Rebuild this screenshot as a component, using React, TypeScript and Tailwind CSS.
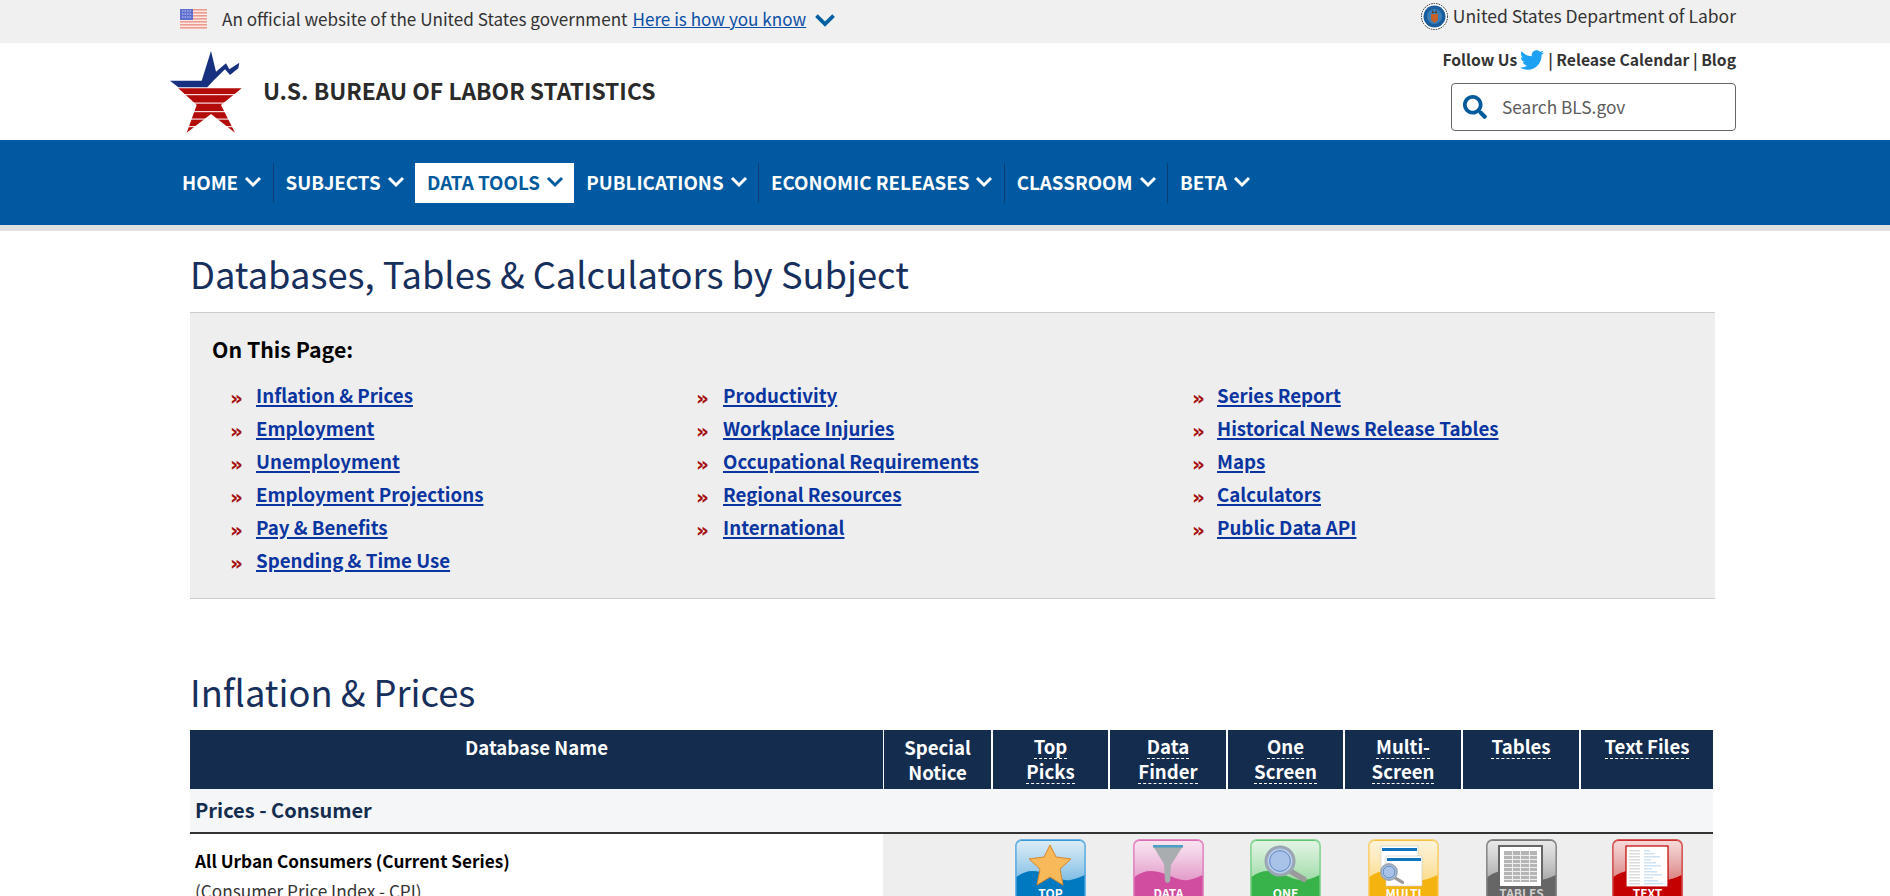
import { FaSearch, FaTwitter } from "react-icons/fa";

const navItems = ["HOME", "SUBJECTS", "DATA TOOLS", "PUBLICATIONS", "ECONOMIC RELEASES", "CLASSROOM", "BETA"];
const navDividers = ["HOME", "PUBLICATIONS", "ECONOMIC RELEASES", "CLASSROOM"];

const col1 = ["Inflation & Prices", "Employment", "Unemployment", "Employment Projections", "Pay & Benefits", "Spending & Time Use"];
const col2 = ["Productivity", "Workplace Injuries", "Occupational Requirements", "Regional Resources", "International"];
const col3 = ["Series Report", "Historical News Release Tables", "Maps", "Calculators", "Public Data API"];

function Chevron({ className }: { className: string }) {
  return (
    <svg className={className} width="18" height="12" viewBox="0 0 18 12" fill="none" stroke="currentColor" strokeWidth="3">
      <path d="M2 2l7 7 7-7" />
    </svg>
  );
}

function Flag() {
  return (
    <svg width="27" height="20" viewBox="0 0 27 20">
      <rect width="27" height="20" fill="#fbe9e6" />
      {[0, 3, 6, 9, 12, 15, 18].map((y) => (
        <rect key={y} y={y} width="27" height="1.6" fill="#ec9c90" />
      ))}
      <rect width="13" height="11" fill="#5f6fd0" />
      {[2, 5, 8].map((y) => (
        <path key={y} d={`M2 ${y}h9`} stroke="#c9cff0" strokeWidth="1" strokeDasharray="1.5 1" />
      ))}
    </svg>
  );
}

function Seal() {
  return (
    <svg width="27" height="27" viewBox="0 0 27 27">
      <circle cx="13.5" cy="13.5" r="13" fill="#fff" stroke="#222" strokeDasharray="1.5 1" />
      <circle cx="13.5" cy="13.5" r="11" fill="#1a5c9c" />
      <circle cx="13.5" cy="13.5" r="7.5" fill="#3a7fb8" />
      <path d="M10 11h7v6l-3.500 3-3.500-3z" fill="#c8602c" />
      <path d="M11 7l2.500 3 2.500-3v3h-5z" fill="#5b3b1e" />
    </svg>
  );
}

function Logo() {
  return (
    <svg width="72" height="82" viewBox="0 0 72 82">
      <path d="M0 29.700h31.700L41 0l5 20.700 10-8.400 3.300 6 10-6.600-1 5.600-8.300 6.700-5-5.700-11.700 11.400-6 6.600H8.300z" fill="#17307f" />
      <path d="M8.300 37.300h63.400L51 54l14 27.700L41 63 16.700 81.700 26.700 54z" fill="#b30a0a" />
      {[43, 51.5, 60, 67.5, 75].map((y) => (
        <rect key={y} x="0" y={y} width="72" height="1.2" fill="#fff" opacity="0.85" />
      ))}
    </svg>
  );
}

function Tile({ id, light, solid, border, label, labelColor, children }: { id: string; light: string; solid: string; border: string; label: string; labelColor: string; children: React.ReactNode }) {
  return (
    <svg width="71" height="70" viewBox="0 0 71 70" className="block mx-auto translate-x-[1px]">
      <defs>
        <linearGradient id={id} x1="0" y1="0" x2="0" y2="1">
          <stop offset="0" stopColor="#ffffff" stopOpacity="0.85" />
          <stop offset="1" stopColor={light} />
        </linearGradient>
      </defs>
      <rect x="0.75" y="0.75" width="69.500" height="68.500" rx="6" fill={solid} stroke={border} strokeWidth="1.500" />
      <path d="M1.500 38c8-6 15-7 24-5s22 10 30 8 10-3 14-5V7a5 5 0 0 0-5-5H6.500a5 5 0 0 0-5 5z" fill={`url(#${id})`} />
      {children}
      <text x="35.500" y="59" textAnchor="middle" fontSize="12" fontWeight="700" fill={labelColor}>{label}</text>
    </svg>
  );
}

function Magnifier({ x, y, r }: { x: number; y: number; r: number }) {
  return (
    <g>
      <path d={`M${x + r * 0.7} ${y + r * 0.7}L${x + r * 1.7} ${y + r * 1.3}`} stroke="#9a9a9a" strokeWidth={r * 0.4} strokeLinecap="round" />
      <circle cx={x} cy={y} r={r} fill="#b9cdea" stroke="#9aa6b4" strokeWidth={r * 0.22} />
      <circle cx={x} cy={y} r={r * 0.74} fill="#a9c2e8" stroke="#4a78b8" strokeWidth="0.8" />
    </g>
  );
}

function HeaderCell({ lines, underline = true, first = false, thin = false }: { lines: string[]; underline?: boolean; first?: boolean; thin?: boolean }) {
  return (
    <div className={`flex flex-col items-center pt-[4px] text-[18.6px] font-bold text-white ${first ? "" : thin ? "border-l border-white" : "border-l-2 border-white"}`}>
      {lines.map((line) => (
        <span key={line} className={underline ? "border-b border-dashed border-white leading-[24px]" : "leading-[25px]"}>{line}</span>
      ))}
    </div>
  );
}

function LinkList({ items, className, linkGap }: { items: string[]; className: string; linkGap: string }) {
  return (
    <ul className={`flex flex-col ${className}`}>
      {items.map((item) => (
        <li key={item} className="flex items-center h-[33px]">
          <span className={`font-['DejaVu_Sans',sans-serif] text-[#a50f0f] font-bold text-[20px] leading-[33px] mt-[8px] ${linkGap}`}>»</span>
          <a href="#" className="text-[#0a35a0] font-bold text-[18.7px] leading-[24px] underline decoration-2 underline-offset-[2px]">{item}</a>
        </li>
      ))}
    </ul>
  );
}

export default function App() {
  return (
    <div className="h-screen overflow-hidden bg-white font-['Noto_Sans_CJK_SC','Liberation_Sans',sans-serif] text-[#222]">
      {/* Gov banner */}
      <div className="h-[43px] bg-[#f0f0f0] flex justify-between pl-[180px] pr-[154px]">
        <div className="flex items-center h-[38px] text-[17.1px] text-[#333]">
          <Flag />
          <span className="ml-[15px]">An official website of the United States government</span>
          <a href="#" className="ml-[5px] text-[#0a4fa5] underline">Here is how you know</a>
          <Chevron className="ml-[8px] w-[22px] h-[15px] text-[#005ea2] mt-[2px]" />
        </div>
        <div className="flex items-center h-[32px] text-[17.5px] text-[#333] gap-[5px]">
          <Seal />
          <span>United States Department of Labor</span>
        </div>
      </div>

      {/* Header */}
      <header className="h-[97px] flex justify-between pl-[170px] pr-[154px]">
        <div className="flex items-start">
          <div className="mt-[8px]"><Logo /></div>
          <div className="ml-[21px] mt-[30px] text-[22.8px] leading-[36px] font-bold text-[#2a2a2a]">U.S. BUREAU OF LABOR STATISTICS</div>
        </div>
        <div className="flex flex-col items-end">
          <div className="mt-[7px] flex items-center h-[20px] text-[15.7px] font-bold text-[#333]">
            Follow Us
            <FaTwitter className="ml-[3px] text-[#1da1f2] text-[24px]" />
            <span className="ml-[4px]">| Release Calendar | Blog</span>
          </div>
          <div className="mt-[13px] w-[285px] h-[48px] border border-[#666] rounded-[4px] flex items-center pl-[11px] text-[17.3px] text-[#5c5c5c]">
            <FaSearch className="text-[#005a9c] text-[24px]" />
            <span className="ml-[15px]">Search BLS.gov</span>
          </div>
        </div>
      </header>

      {/* Main nav */}
      <nav className="h-[85px] bg-[#0059a1] pl-[170px] pt-[23px]">
        <ul className="flex h-[40px]">
          {navItems.map((item) => (
            <li
              key={item}
              className={`flex items-center gap-[6px] pl-3 pr-[10.4px] pb-[2px] text-[18.75px] font-bold ${item === "DATA TOOLS" ? "bg-white text-[#005a9c]" : "text-white"} ${navDividers.includes(item) ? "border-r border-[#0b3f73]" : ""}`}
            >
              {item}
              <Chevron className="" />
            </li>
          ))}
        </ul>
      </nav>
      <div className="h-[6px] bg-[#e0e0e0]" />

      <main className="pl-[190px] pr-[175px]">
        <h1 className="mt-[18px] mb-[15px] text-[36.3px] leading-[48px] text-[#172f5c]">Databases, Tables &amp; Calculators by Subject</h1>

        <section className="h-[287px] bg-[#eee] border-y border-[#ccc] pl-[22px] pt-[20px]">
          <h2 className="text-[21.3px] leading-[32px] font-bold text-black">On This Page:</h2>
          <div className="mt-[13px] pl-[18px] flex">
            <LinkList items={col1} className="w-[466px]" linkGap="w-[26px]" />
            <LinkList items={col2} className="w-[496px]" linkGap="w-[27px]" />
            <LinkList items={col3} className="" linkGap="w-[25px]" />
          </div>
        </section>

        <h2 className="mt-[68px] mb-[15px] text-[36.3px] leading-[48px] text-[#172f5c]">Inflation &amp; Prices</h2>

        {/* Database table */}
        <div className="w-[1523px]">
          <div className="grid grid-cols-[693px_108px_117px_118px_117px_118px_118px_134px] h-[59px] bg-[#142d4f]">
            <HeaderCell lines={["Database Name"]} underline={false} first />
            <HeaderCell lines={["Special", "Notice"]} underline={false} thin />
            <HeaderCell lines={["Top", "Picks"]} />
            <HeaderCell lines={["Data", "Finder"]} />
            <HeaderCell lines={["One", "Screen"]} />
            <HeaderCell lines={["Multi-", "Screen"]} />
            <HeaderCell lines={["Tables"]} />
            <HeaderCell lines={["Text Files"]} />
          </div>
          <div className="h-[45px] bg-[#f5f6f8] border-b-2 border-[#333] flex items-center pl-[5px] pb-[1px] text-[20px] font-bold text-[#142d4f]">Prices - Consumer</div>
          <div className="grid grid-cols-[693px_108px_117px_118px_117px_118px_118px_134px] h-[120px]">
            <div className="pl-[5px] pt-[14px]">
              <div className="text-[17.2px] leading-[26px] font-bold text-black">All Urban Consumers (Current Series)</div>
              <div className="mt-[4px] text-[17.2px] leading-[26px] text-[#333]">(Consumer Price Index - CPI)</div>
            </div>
            <div className="bg-[#eee]" />
            <div className="bg-[#eee] pt-[5px]">
              <Tile id="t1" light="#7fbde4" solid="#0079c1" border="#6db6e6" label="TOP" labelColor="#fff">
                <path d="M35 6l6 12 15 2-11 10 3 16-13-8-13 8 3-16-11-10 15-2z" fill="#f8b95a" stroke="#d9862a" strokeWidth="1" strokeLinejoin="round" />
              </Tile>
            </div>
            <div className="bg-[#eee] pt-[5px]">
              <Tile id="t2" light="#e39ac8" solid="#d04d9f" border="#e48cc4" label="DATA" labelColor="#fff">
                <path d="M20 7h30L38 26l-1 17-3 1-2-2-1-17z" fill="#a9adb0" />
                <rect x="20" y="6" width="30" height="2.500" fill="#4a9fc4" />
              </Tile>
            </div>
            <div className="bg-[#eee] pt-[5px]">
              <Tile id="t3" light="#9edba6" solid="#37b34a" border="#8fd89a" label="ONE" labelColor="#fff">
                <Magnifier x={30} y={22} r={14} />
              </Tile>
            </div>
            <div className="bg-[#eee] pt-[5px]">
              <Tile id="t4" light="#fbdc8c" solid="#f5b30f" border="#fad27a" label="MULTI" labelColor="#fff">
                <rect x="13" y="7" width="37" height="30" fill="#fff" stroke="#c9c9c9" strokeWidth="0.6" />
                <rect x="14" y="9" width="35" height="3" fill="#0f74c0" />
                <rect x="18" y="17" width="36" height="30" fill="#fff" stroke="#c9c9c9" strokeWidth="0.6" />
                <rect x="19" y="19" width="34" height="3" fill="#0f74c0" />
                <Magnifier x={21} y={33} r={8} />
              </Tile>
            </div>
            <div className="bg-[#eee] pt-[5px]">
              <Tile id="t5" light="#a9a9a9" solid="#666" border="#8a8a8a" label="TABLES" labelColor="#d0d0d0">
                <rect x="13" y="7" width="43" height="41" fill="#fff" stroke="#666" strokeWidth="2" />
                <rect x="18" y="12" width="33" height="31" fill="#b5b5b5" />
                {[16, 20, 24, 28, 32, 36, 40].map((y) => (
                  <rect key={y} x="18" y={y} width="33" height="1" fill="#eee" />
                ))}
                {[26, 34, 43].map((x) => (
                  <rect key={x} x={x} y="12" width="1" height="31" fill="#eee" />
                ))}
              </Tile>
            </div>
            <div className="bg-[#eee] pt-[5px]">
              <Tile id="t6" light="#d98080" solid="#c40000" border="#d65c5c" label="TEXT" labelColor="#fff">
                <rect x="14" y="7" width="42" height="41" fill="#fff" stroke="#c40000" strokeWidth="1.200" />
                {[11, 14, 17, 20, 23, 26, 29, 32, 35, 38, 41, 44].map((y, i) => (
                  <g key={y}>
                    <rect x="17" y={y} width="11" height="1.500" fill="#dcdcdc" />
                    <rect x="32" y={y} width={6 + ((i * 5) % 14)} height="1.500" fill="#cfe2f5" />
                  </g>
                ))}
              </Tile>
            </div>
          </div>
        </div>
      </main>
    </div>
  );
}
